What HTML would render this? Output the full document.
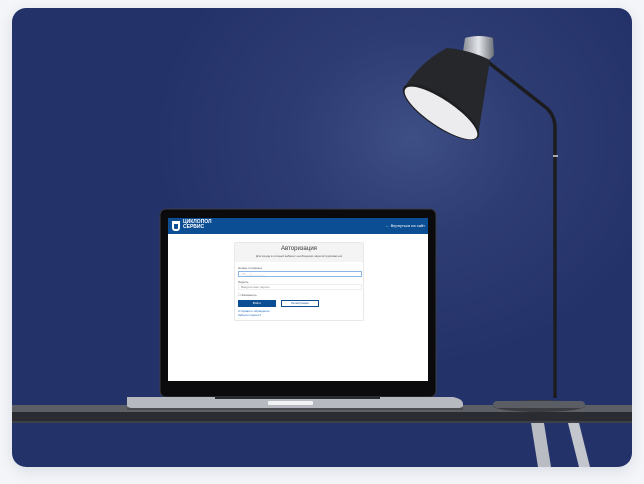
<!DOCTYPE html>
<html><head><meta charset="utf-8"><style>
*{margin:0;padding:0;box-sizing:border-box}
body{width:644px;height:484px;background:#f3f5f8;position:relative;overflow:hidden;font-family:"Liberation Sans",sans-serif}
.card{position:absolute;left:12px;top:8px;width:620px;height:459px;border-radius:14px;overflow:hidden;
background:radial-gradient(ellipse 260px 230px at 400px 130px,#3e4f86 0%,#2d3c72 45%,#24326a 100%);box-shadow:0 4px 14px rgba(40,60,100,.12)}
.abs{position:absolute}
</style></head><body>
<div class="card">
<svg width="620" height="459" viewBox="12 8 620 459" style="position:absolute;left:0;top:0">
<defs><linearGradient id="cap" x1="0" x2="1"><stop offset="0" stop-color="#8a8e95"/><stop offset=".5" stop-color="#e4e6ea"/><stop offset="1" stop-color="#6c7078"/></linearGradient></defs>
<!-- table -->
<rect x="12" y="405" width="620" height="8" fill="#5c5f66"/>
<rect x="12" y="412" width="620" height="10" fill="#2a2c31"/>
<rect x="12" y="421" width="620" height="2" fill="#3d4047"/>
<!-- legs -->
<polygon points="531,423 544,423 551,467 538,467" fill="#b9bcc2"/>
<polygon points="568,423 579,423 590,467 579,467" fill="#c3c6cc"/>
<!-- lamp -->
<path d="M488,62 L544,106 Q555,114 555,128 L555,398" stroke="#1c1c1f" stroke-width="3.5" fill="none"/>
<rect x="553" y="155" width="5" height="2" fill="#aaa"/>
<ellipse cx="539" cy="406" rx="46" ry="6" fill="#3a3c42"/>
<rect x="493" y="401" width="92" height="7" rx="4" fill="#5a5d63"/>
<path d="M465,38 Q479,34 493,38 L494,55 Q488,62 484,62 L463,52Z" fill="url(#cap)"/>
<path d="M447,48 Q470,50 490,60 L478,136 L404,88 Q420,62 447,48Z" fill="#26272a"/>
<ellipse cx="441" cy="112" rx="45" ry="15" transform="rotate(34 441 112)" fill="#1e1f22"/>
<ellipse cx="441" cy="113" rx="43" ry="13" transform="rotate(34 441 113)" fill="#ececef"/>
<!-- laptop -->
<rect x="160" y="209" width="276" height="188" rx="6" fill="#0b0b0d" stroke="#3a3d45" stroke-width="1"/>
<path d="M127,397 L453,397 Q463,399 463,404 L463,406 Q460,409 450,409 L140,409 Q130,409 127,406Z" fill="#b7b9c1"/>
<rect x="127" y="408" width="336" height="2" fill="#4a4c52"/>
<rect x="215" y="396" width="165" height="3" fill="#2a2b30"/>
<rect x="268" y="401" width="45" height="4" rx="1" fill="#f2f2f4"/>
</svg>
<div class="abs" style="left:156px;top:210px;width:260px;height:163px;background:#fff">
 <div style="height:16px;background:#0c4e93;position:relative">
  <div class="abs" style="left:4px;top:3px;width:8px;height:10px;border:2px solid #fff;border-top-width:3px;border-radius:0 0 3px 3px"></div>
  <div class="abs" style="left:15px;top:2px;color:#fff;font-size:5px;line-height:5px;font-weight:bold">ЦИКЛОПОЛ<br>СЕРВИС</div>
  <div class="abs" style="right:3px;top:5px;color:#fff;font-size:4px">← Вернуться на сайт</div>
 </div>
 <div class="abs" style="left:66px;top:24px;width:130px;height:79px;border:1px solid #e8e8e8;border-radius:2px">
  <div style="background:#f4f4f4;height:19px;text-align:center;font-size:6px;color:#333;padding-top:3px">Авторизация<div style="font-size:3px;color:#555;margin-top:2px">Для входа в личный кабинет необходимо зарегистрироваться</div></div>
  <div class="abs" style="left:3px;top:23px;font-size:3px;color:#555">Номер телефона</div>
  <div class="abs" style="left:3px;top:28px;width:124px;height:6px;border:1px solid #8bb6e8;font-size:3px;color:#aaa;padding-left:2px">+7(___)___-__-__</div>
  <div class="abs" style="left:3px;top:37px;font-size:3px;color:#555">Пароль</div>
  <div class="abs" style="left:3px;top:41px;width:124px;height:6px;border:1px solid #eee;font-size:3px;color:#888;padding-left:2px">Введите ваш пароль</div>
  <div class="abs" style="left:3px;top:50px;font-size:3px;color:#555">☐ Запомнить</div>
  <div class="abs" style="left:3px;top:57px;width:38px;height:7px;background:#0c4e93;color:#fff;font-size:3px;text-align:center;line-height:7px">Войти</div>
  <div class="abs" style="left:46px;top:57px;width:38px;height:7px;border:1px solid #0c4e93;color:#0c4e93;font-size:3px;text-align:center;line-height:5px">Регистрация</div>
  <div class="abs" style="left:3px;top:66px;font-size:3px;color:#2a6fc0;line-height:4px">Отправить обращение<br>Забыли пароль?</div>
 </div>
</div>
</div>
</body></html>
